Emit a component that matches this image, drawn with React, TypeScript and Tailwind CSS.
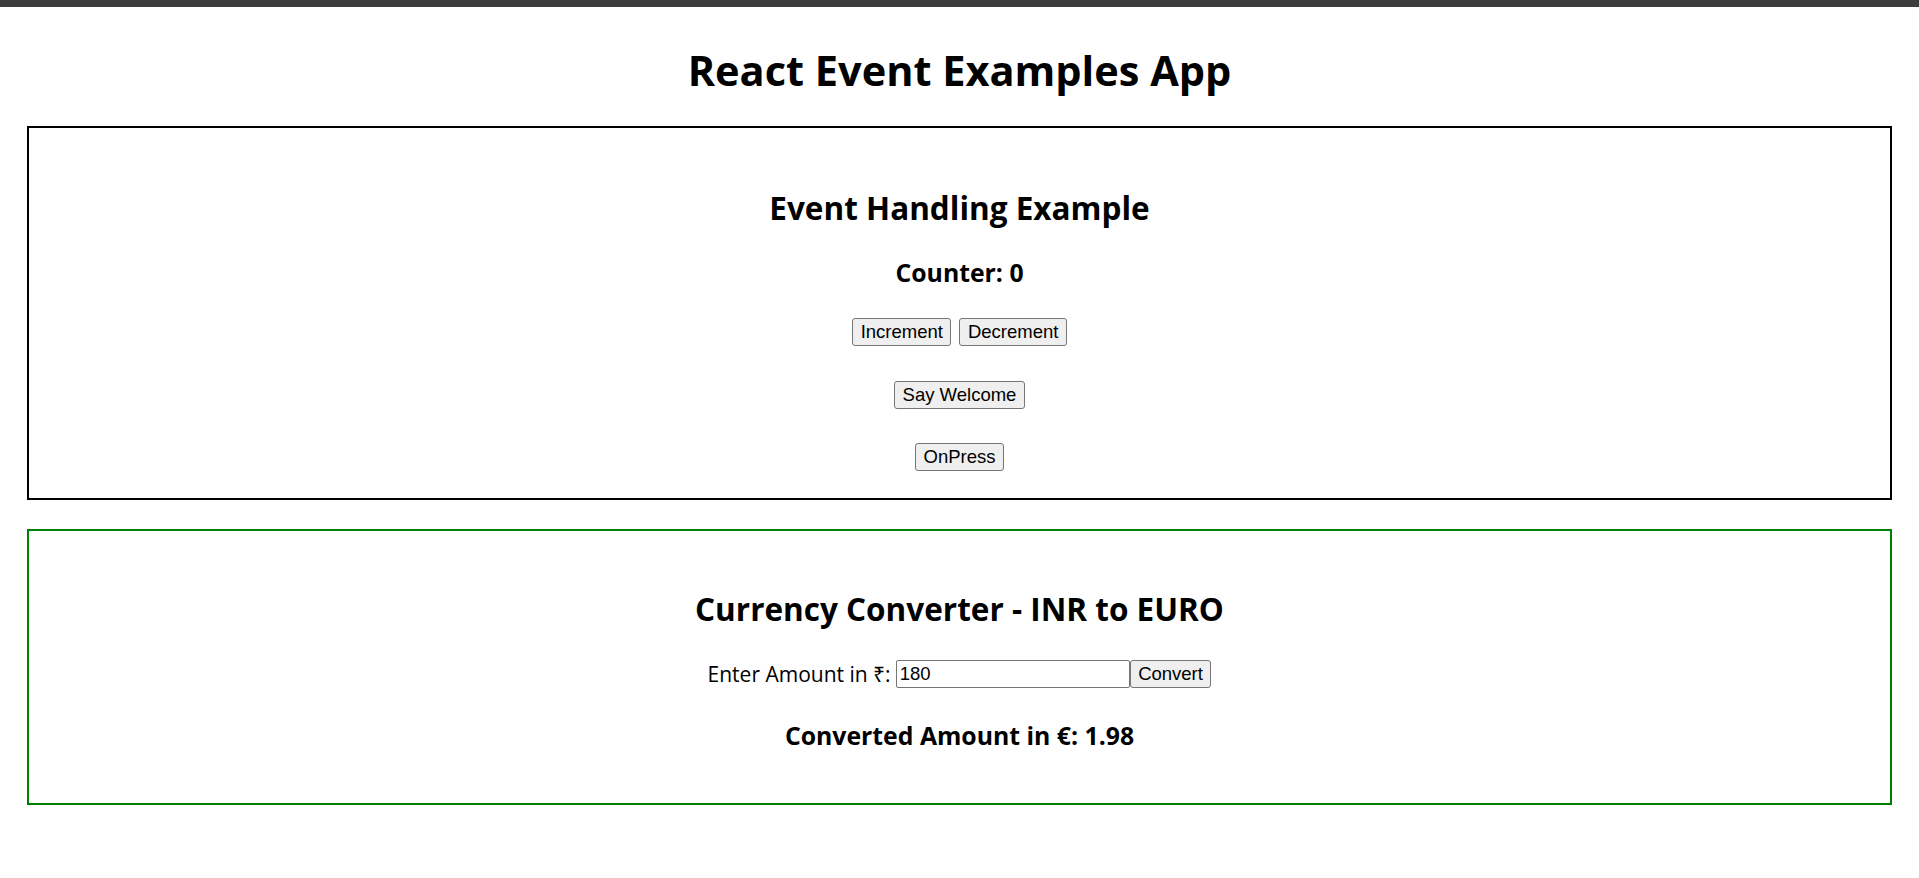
import { useState } from "react";

const FONT = "font-['Open_Sans','Noto_Sans','DejaVu_Sans',sans-serif]";
const BTN =
  "font-['Liberation_Sans',Arial,sans-serif] text-[18.5px] leading-[20px] text-black bg-[#efefef] border border-[#767676] rounded-[3px] px-[7.5px] py-[3px] hover:bg-[#e5e5e5]";

function EventExample() {
  const [count, setCount] = useState(0);

  return (
    <section className="mx-[27px] border-2 border-black flex flex-col items-center pt-[62px] pb-[27px]">
      <h2 className="text-[31.5px] leading-[36px] font-bold">Event Handling Example</h2>
      <h3 className="mt-[32px] text-[24.8px] leading-[28px] font-bold">Counter: {count}</h3>
      <div className="mt-[32px] flex gap-[8px]">
        <button className={BTN} onClick={() => setCount(count + 1)}>
          Increment
        </button>
        <button className={BTN} onClick={() => setCount(count - 1)}>
          Decrement
        </button>
      </div>
      <button className={`${BTN} mt-[35px]`} onClick={() => alert("Welcome!")}>
        Say Welcome
      </button>
      <button className={`${BTN} mt-[34px]`} onClick={() => alert("Button pressed")}>
        OnPress
      </button>
    </section>
  );
}

function CurrencyConverter() {
  const [amount, setAmount] = useState("180");
  const [euro, setEuro] = useState(1.98);

  return (
    <section className="mx-[27px] mt-[29px] border-2 border-[#008000] flex flex-col items-center pt-[60px] pb-[54px]">
      <h2 className="text-[31.5px] leading-[36px] font-bold">Currency Converter - INR to EURO</h2>
      <div className="mt-[33px] h-[28px] flex items-center text-[21px] leading-[28px]">
        <label htmlFor="inr" className="mr-[5px]">
          Enter Amount in ₹:
        </label>
        <input
          id="inr"
          value={amount}
          onChange={(e) => setAmount(e.target.value)}
          className="w-[234px] h-[28px] border border-[#767676] rounded-[2px] px-[3px] font-['Liberation_Sans',Arial,sans-serif] text-[18.5px] text-black outline-none"
        />
        <button className={`${BTN} h-[28px]`} onClick={() => setEuro(Number((Number(amount) * 0.011).toFixed(2)))}>
          Convert
        </button>
      </div>
      <h3 className="mt-[33px] text-[24.8px] leading-[28px] font-bold">Converted Amount in €: {euro}</h3>
    </section>
  );
}

export default function App() {
  return (
    <div className={`${FONT} min-h-[878px] bg-white text-black`}>
      <div className="h-[7px] bg-[#3c3c3c]" />
      <h1 className="mt-[39px] mb-[32px] text-center text-[41.5px] leading-[48px] font-bold">React Event Examples App</h1>
      <EventExample />
      <CurrencyConverter />
    </div>
  );
}
